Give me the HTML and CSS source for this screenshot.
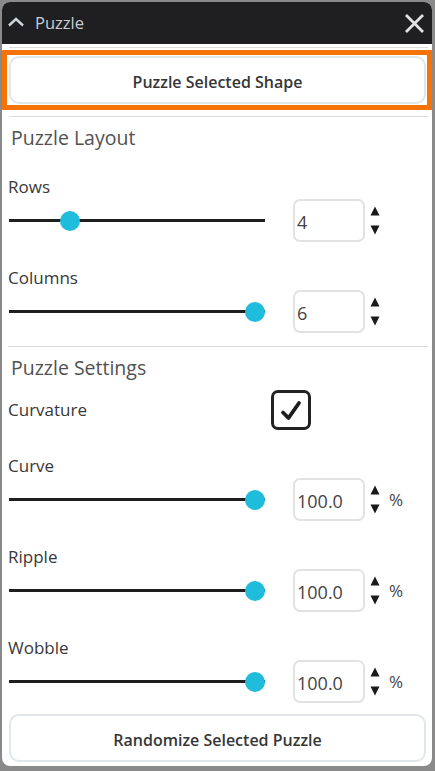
FILE: index.html
```html
<!DOCTYPE html>
<html>
<head>
<meta charset="utf-8">
<link rel="stylesheet" href="styles.css">
</head>
<body>
<div class="panel">
  <div class="header">
    <svg class="chev" width="18" height="12" viewBox="0 0 18 12"><polyline points="2,8.5 9,2 16,8.5" fill="none" stroke="#cdd2d8" stroke-width="2.4"/></svg>
    <span class="header-title">Puzzle</span>
    <svg class="close" width="21" height="21" viewBox="0 0 21 21"><path d="M2 2 L19 19 M19 2 L2 19" fill="none" stroke="#e2e2e2" stroke-width="2.8"/></svg>
  </div>
  <div class="sep sep-top"></div>
  <div class="highlight"><button class="btn">Puzzle Selected Shape</button></div>
  <div class="sep sep-mid"></div>

  <div class="section">
    <div class="section-title">Puzzle Layout</div>
    <div class="field">
      <div class="label">Rows</div>
      <div class="control">
        <input type="range" class="slider" min="1" max="15" value="4">
        <div class="num">4</div>
        <svg class="spin" width="10" height="43" viewBox="0 0 10 43"><polygon points="0.5,16.5 5,7.5 9.5,16.5"/><polygon points="0.5,26.5 9.5,26.5 5,35.5"/></svg>
      </div>
    </div>
    <div class="field">
      <div class="label">Columns</div>
      <div class="control">
        <input type="range" class="slider" min="1" max="6" value="6">
        <div class="num">6</div>
        <svg class="spin" width="10" height="43" viewBox="0 0 10 43"><polygon points="0.5,16.5 5,7.5 9.5,16.5"/><polygon points="0.5,26.5 9.5,26.5 5,35.5"/></svg>
      </div>
    </div>
    <div class="divider"></div>
    <div class="section-title settings">Puzzle Settings</div>
    <div class="check-row">
      <div class="label check-label">Curvature</div>
      <div class="checkbox"><svg width="34" height="34" viewBox="0 0 34 34"><polyline points="9,19.5 14.5,25 25,10" fill="none" stroke="#1c1c1c" stroke-width="3.8" stroke-linecap="round" stroke-linejoin="round"/></svg></div>
    </div>
    <div class="field">
      <div class="label">Curve</div>
      <div class="control">
        <input type="range" class="slider" min="0" max="100" value="100">
        <div class="num">100.0</div>
        <svg class="spin" width="10" height="43" viewBox="0 0 10 43"><polygon points="0.5,16.5 5,7.5 9.5,16.5"/><polygon points="0.5,26.5 9.5,26.5 5,35.5"/></svg>
        <span class="pct">%</span>
      </div>
    </div>
    <div class="field">
      <div class="label">Ripple</div>
      <div class="control">
        <input type="range" class="slider" min="0" max="100" value="100">
        <div class="num">100.0</div>
        <svg class="spin" width="10" height="43" viewBox="0 0 10 43"><polygon points="0.5,16.5 5,7.5 9.5,16.5"/><polygon points="0.5,26.5 9.5,26.5 5,35.5"/></svg>
        <span class="pct">%</span>
      </div>
    </div>
    <div class="field">
      <div class="label">Wobble</div>
      <div class="control">
        <input type="range" class="slider" min="0" max="100" value="100">
        <div class="num">100.0</div>
        <svg class="spin" width="10" height="43" viewBox="0 0 10 43"><polygon points="0.5,16.5 5,7.5 9.5,16.5"/><polygon points="0.5,26.5 9.5,26.5 5,35.5"/></svg>
        <span class="pct">%</span>
      </div>
    </div>
  </div>
  <button class="btn btn-bottom">Randomize Selected Puzzle</button>
</div>
</body>
</html>
```
FILE: styles.css
```css
* { box-sizing: border-box; }
html, body { margin: 0; padding: 0; }
body {
  width: 435px;
  height: 771px;
  background: #8a8a8a;
  padding: 2px 3px 5px 2px;
  font-family: "Open Sans", "Noto Sans", sans-serif;
  overflow: hidden;
}
.panel {
  width: 430px;
  height: 764px;
  background: #ffffff;
  border-radius: 8px;
  overflow: hidden;
  display: flex;
  flex-direction: column;
}
.header {
  height: 42px;
  flex: 0 0 42px;
  background: #1f1f22;
  display: flex;
  align-items: center;
  padding: 0 7px 0 5px;
}
.chev { display: block; flex: 0 0 18px; }
.header-title {
  margin-left: 10px;
  font-size: 16.5px;
  line-height: 42px;
  color: #c8cdd4;
  flex: 1;
}
.close { display: block; }
.sep {
  height: 1px;
  flex: 0 0 1px;
  background: #dcdcdc;
  margin-left: 7px;
  margin-right: 4px;
}
.sep-top { margin-top: 3px; margin-bottom: 2px; }
.sep-mid { margin-top: 6px; }
.highlight {
  height: 60px;
  flex: 0 0 60px;
  border: 5px solid #f57307;
  padding: 1px 1px 1px 2px;
}
.btn {
  display: flex;
  align-items: center;
  justify-content: center;
  width: 100%;
  height: 48px;
  margin: 0;
  padding: 4px 0 0 0;
  background: #ffffff;
  border: 2px solid #e1e6ea;
  border-radius: 10px;
  font-family: "Open Sans", "Noto Sans", sans-serif;
  font-size: 16px;
  font-weight: 600;
  color: #363636;
}
.btn-bottom {
  flex: 0 0 48px;
  width: auto;
  margin: 11px 6px 0 7px;
}
.section {
  padding: 0 4px 0 6px;
}
.section-title {
  margin-top: 8px;
  margin-left: 3px;
  font-size: 19.5px;
  line-height: 26px;
  color: #515151;
}
.field { margin-top: 25px; }
.label {
  font-size: 17px;
  line-height: 22px;
  color: #383838;
}
.control {
  margin-top: 1px;
  height: 43px;
  display: flex;
  align-items: center;
}
.slider {
  -webkit-appearance: none;
  appearance: none;
  width: 256px;
  height: 20px;
  margin: 0 28px 0 1px;
  padding: 0;
  background: transparent;
}
.slider::-webkit-slider-runnable-track {
  height: 3px;
  background: #1e1e1e;
  border: none;
}
.slider::-webkit-slider-thumb {
  -webkit-appearance: none;
  appearance: none;
  width: 20px;
  height: 20px;
  border-radius: 50%;
  background: #20bcdb;
  border: none;
  margin-top: -8.5px;
}
.num {
  width: 72px;
  height: 43px;
  border: 2px solid #e2e2e2;
  border-radius: 7px;
  padding: 4px 0 0 2px;
  font-size: 18px;
  line-height: 35px;
  color: #444444;
}
.spin {
  display: block;
  margin-left: 5px;
  fill: #1a1a1a;
}
.pct {
  margin-left: 9px;
  font-size: 17px;
  color: #444444;
}
.divider {
  height: 1px;
  background: #dcdcdc;
  margin-top: 13px;
}
.settings { margin-top: 8px; }
.check-row {
  margin-top: 9px;
  height: 40px;
  display: flex;
  align-items: center;
}
.check-label { flex: 0 0 263px; }
.checkbox {
  width: 40px;
  height: 40px;
  border: 3px solid #222222;
  border-radius: 7px;
}
.checkbox svg { display: block; }
```
